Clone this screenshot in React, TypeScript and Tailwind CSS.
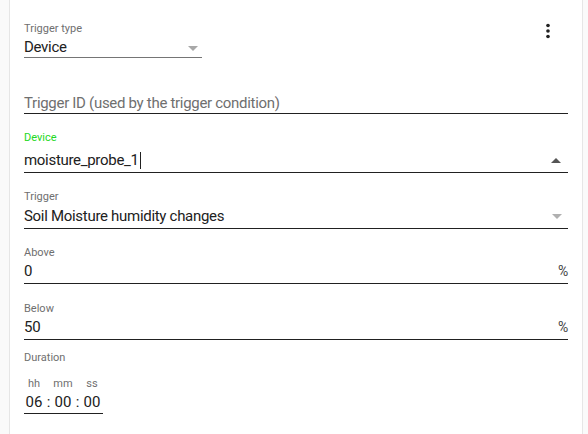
import React from "react";

function Arrow({ up = false, className = "" }: { up?: boolean; className?: string }) {
  return (
    <svg width="10" height="5" viewBox="0 0 10 5" className={className}>
      <polygon points={up ? "0,5 5,0 10,5" : "0,0 10,0 5,5"} fill="currentColor" />
    </svg>
  );
}

function MoreVert() {
  return (
    <svg width="22" height="22" viewBox="0 0 24 24" className="text-[#212121]">
      <circle cx="12" cy="6" r="2" fill="currentColor" />
      <circle cx="12" cy="12" r="2" fill="currentColor" />
      <circle cx="12" cy="18" r="2" fill="currentColor" />
    </svg>
  );
}

function NumberField({ label, value, className = "" }: { label: string; value: string; className?: string }) {
  return (
    <div className={`border-b border-[#212121] pb-[2px] ${className}`}>
      <div className="h-4 text-[11px] leading-4 text-[#6f6f6f]">{label}</div>
      <div className="flex h-5 items-center justify-between text-[15px] leading-5 tracking-[-0.3px] text-[#212121]">
        <span>{value}</span>
        <span className="text-sm text-[#444]">%</span>
      </div>
    </div>
  );
}

export default function App() {
  return (
    <div
      className="flex h-[434px] w-[588px] overflow-hidden bg-[#fafafa]"
      style={{ fontFamily: "Roboto, 'Liberation Sans', sans-serif" }}
    >
      <div className="ml-[9px] flex w-[574px] flex-col border-x border-[#e6e6e6] bg-white pl-[14px] pr-[14px] pt-[21px]">
        {/* Trigger type */}
        <div className="flex items-start justify-between">
          <div className="w-[178px] border-b border-[#757575]">
            <div className="h-4 text-[11px] leading-4 text-[#6f6f6f]">Trigger type</div>
            <div className="flex h-5 items-center justify-between text-[15px] leading-5 tracking-[-0.3px] text-[#212121]">
              <span>Device</span>
              <Arrow className="mr-[4px] mt-[2px] text-[#a8a8a8]" />
            </div>
          </div>
          <div className="-mt-[1px] mr-[9px]">
            <MoreVert />
          </div>
        </div>

        {/* Trigger ID */}
        <div className="mt-[19px] border-b border-[#212121]">
          <div className="h-4" />
          <div className="h-5 text-[15px] leading-5 tracking-[-0.3px] text-[#6f6f6f]">
            Trigger ID (used by the trigger condition)
          </div>
        </div>

        {/* Device */}
        <div className="mt-4 border-b border-[#212121] pb-[2px]">
          <div className="h-4 text-[11px] leading-4 text-[#22d822]">Device</div>
          <div className="mt-1 flex h-5 items-center justify-between text-[15px] leading-5 tracking-[-0.3px] text-[#212121]">
            <span className="flex items-center">
              moisture_probe_1
              <span className="ml-[1px] inline-block h-[17px] w-px bg-[#212121]" />
            </span>
            <Arrow up className="mr-[7px] mt-[1px] text-[#555]" />
          </div>
        </div>

        {/* Trigger */}
        <div className="mt-4 border-b border-[#212121] pb-[2px]">
          <div className="h-4 text-[11px] leading-4 text-[#6f6f6f]">Trigger</div>
          <div className="mt-[1px] flex h-5 items-center justify-between text-[15px] leading-5 tracking-[-0.3px] text-[#212121]">
            <span>Soil Moisture humidity changes</span>
            <Arrow className="mr-[6px] text-[#b0b0b0]" />
          </div>
        </div>

        <NumberField label="Above" value="0" className="mt-4" />
        <NumberField label="Below" value="50" className="mt-[17px]" />

        {/* Duration */}
        <div className="mt-[10px] h-4 text-[11px] leading-4 text-[#6f6f6f]">Duration</div>
        <div className="mt-[10px] w-[79px] border-b border-[#212121] pb-[1px]">
          <div className="flex h-4 text-[11px] leading-4 text-[#6f6f6f]">
            <span className="w-5 text-center">hh</span>
            <span className="w-[9px]" />
            <span className="w-5 text-center">mm</span>
            <span className="w-[9px]" />
            <span className="w-5 text-center">ss</span>
          </div>
          <div className="flex h-5 text-[15px] leading-5 text-[#212121]">
            <span className="w-5 text-center">06</span>
            <span className="w-[9px] text-center">:</span>
            <span className="w-5 text-center">00</span>
            <span className="w-[9px] text-center">:</span>
            <span className="w-5 text-center">00</span>
          </div>
        </div>
      </div>
    </div>
  );
}
